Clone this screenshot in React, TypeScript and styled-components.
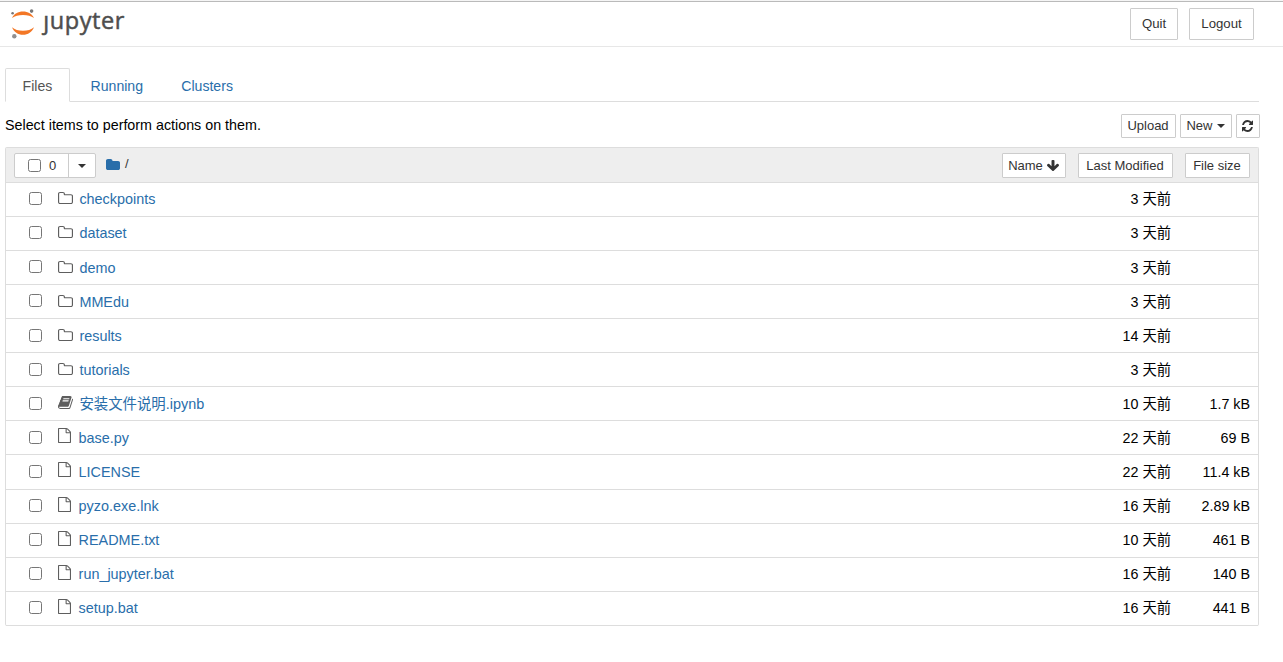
import React, { FC } from 'react'
import styled, { createGlobalStyle } from 'styled-components'

const GlobalStyle = createGlobalStyle`
  * {
    box-sizing: border-box;
  }

  body {
    margin: 0;
    background: #fff;
    color: #000;
    font-family: 'Liberation Sans', 'Noto Sans CJK SC', sans-serif;
    font-size: 14px;
    line-height: 20px;
  }
`

const Page = styled.div`
  height: 662px;
  overflow: hidden;
  border-top: 1px solid #f5f5f5;
`

const Header = styled.header`
  display: flex;
  justify-content: space-between;
  height: 46px;
  padding: 6px 29px 0 10px;
  border-top: 1px solid #bababa;
  border-bottom: 1px solid #e7e7e7;
`

const Logo = styled.svg`
  display: block;
  width: 120px;
  height: 34px;
  overflow: visible;
`

const HeaderButtons = styled.div`
  display: flex;
  gap: 11px;
`

const HeaderButton = styled.button<{ $width: number }>`
  width: ${(p) => p.$width}px;
  height: 32px;
  padding: 0;
  border: 1px solid #ccc;
  border-radius: 1px;
  background: #fff;
  color: #333;
  font: 13.2px/20px 'Liberation Sans', sans-serif;
`

const Main = styled.main`
  width: 1254px;
  margin: 21px 0 0 5px;
`

const Tabs = styled.nav`
  display: flex;
  height: 34px;
  border-bottom: 1px solid #ddd;
`

const Tab = styled.a<{ $active?: boolean }>`
  height: 34px;
  margin-right: 3px;
  padding: 7px 16.6px 0;
  border: 1px solid ${(p) => (p.$active ? '#ddd' : 'transparent')};
  border-bottom-color: ${(p) => (p.$active ? '#fff' : 'transparent')};
  border-radius: 2px 2px 0 0;
  color: ${(p) => (p.$active ? '#555' : '#296eaa')};
  font-size: 14.1px;
`

const Toolbar = styled.div`
  display: flex;
  justify-content: space-between;
  height: 45px;
  padding-top: 12px;
`

const Hint = styled.span`
  font-size: 14.3px;
  line-height: 22px;
`

const ToolbarButtons = styled.div`
  display: flex;
  gap: 4px;
  margin-right: -1px;
`

const SmallButton = styled.button<{ $width: number; $height?: number }>`
  display: flex;
  align-items: center;
  justify-content: center;
  gap: 4px;
  width: ${(p) => p.$width}px;
  height: ${(p) => p.$height || 24}px;
  padding: 0 1px 0 0;
  border: 1px solid #ccc;
  border-radius: 1px;
  background: #fff;
  color: #333;
  font: 13px/20px 'Liberation Sans', sans-serif;
  white-space: nowrap;
`

const Caret = styled.span`
  border: 4px solid transparent;
  border-top-color: currentColor;
  border-bottom: 0;
`

const List = styled.div`
  border: 1px solid #ddd;
  border-bottom: 0;
  border-radius: 2px;
`

const ListHeader = styled.div`
  display: flex;
  align-items: flex-start;
  height: 34.84px;
  padding: 5px 8px 0;
  border-bottom: 1px solid #ddd;
  background: #eee;
`

const SelectGroup = styled.div`
  display: flex;
  width: 82px;
  height: 25px;
  border: 1px solid #ccc;
  border-radius: 2px;
  background: #fff;
`

const SelectAll = styled.label`
  display: flex;
  align-items: center;
  gap: 8px;
  width: 54px;
  padding-left: 13px;
  border-right: 1px solid #ccc;
  color: #333;
  font-size: 13px;
`

const SelectMenu = styled.div`
  display: flex;
  flex: 1;
  align-items: center;
  justify-content: center;
  color: #333;
`

const Checkbox = styled.input`
  flex: none;
  width: 13px;
  height: 13px;
  margin: 0;
`

const Breadcrumb = styled.div`
  display: flex;
  flex: 1;
  align-items: center;
  gap: 5px;
  margin: 1px 0 0 10px;
  color: #333;
  font-size: 13px;
`

const SortButtons = styled.div`
  display: flex;
  gap: 12px;
`

const Row = styled.div`
  display: flex;
  align-items: center;
  height: 34.08px;
  padding: 0 8px 0 23px;
  border-bottom: 1px solid #ddd;
  font-size: 14.4px;

  ${Checkbox} {
    margin-top: -1.32px;
  }
`

const IconSlot = styled.span<{ $gap: number; $lift: number }>`
  display: flex;
  flex: none;
  align-items: center;
  margin: ${(p) => -p.$lift}px ${(p) => p.$gap}px 0 16px;
  color: #5e5e5e;
`

const Name = styled.a`
  flex: 1;
  color: #296eaa;
`

const Modified = styled.span`
  font-size: 14.3px;
`

const Size = styled.span`
  width: 79px;
  font-size: 14.3px;
  text-align: right;
`

const glyphs = {
  folder: {
    box: '64 128 1664 1408',
    d: 'M1728 608v704q0 92-66 158t-158 66h-1216q-92 0-158-66t-66-158v-960q0-92 66-158t158-66h320q92 0 158 66t66 158v32h672q92 0 158 66t66 158z',
  },
  folderOpen: {
    box: '64 128 1664 1408',
    d: 'M1600 1312v-704q0-40-28-68t-68-28h-704q-40 0-68-28t-28-68v-64q0-40-28-68t-68-28h-320q-40 0-68 28t-28 68v960q0 40 28 68t68 28h1216q40 0 68-28t28-68zm128-704v704q0 92-66 158t-158 66h-1216q-92 0-158-66t-66-158v-960q0-92 66-158t158-66h320q92 0 158 66t66 158v32h672q92 0 158 66t66 158z',
  },
  file: {
    box: '0 0 1536 1792',
    d: 'M1468 380q28 28 48 76t20 88v1152q0 40-28 68t-68 28h-1344q-40 0-68-28t-28-68v-1600q0-40 28-68t68-28h896q40 0 88 20t76 48zm-444-244v376h376q-10-29-22-41l-313-313q-12-12-41-22zm384 1528v-1024h-416q-40 0-68-28t-28-68v-416h-768v1536h1280z',
  },
  notebook: {
    box: '64 128 1664 1536',
    d: 'M1703 478q40 57 18 129l-275 906q-19 64-76.5 107.5t-122.5 43.5h-923q-77 0-148.5-53.5t-99.5-131.5q-24-67-2-127 0-4 3-27t4-37q1-8-3-21.5t-3-19.5q2-11 8-21t16.5-23.5 16.5-23.5q23-38 45-91.5t30-91.5q3-10 .5-30t-.5-28q3-11 17-28t17-23q21-36 42-92t25-90q1-9-2.5-32t.5-28q4-13 22-30.5t22-22.5q19-26 42.5-84.5t27.5-96.5q1-8-3-25.5t-2-26.5q2-8 9-18t18-23 17-21q8-12 16.5-30.5t15-35 16-36 19.5-32 26.5-23.5 36-11.5 47.5 5.5l-1 3q38-9 51-9h761q74 0 114 56t18 130l-274 906q-36 119-71.5 153.5t-128.5 34.5h-869q-27 0-38 15-11 16-1 43 24 70 144 70h923q29 0 56-15.5t35-41.5l300-987q7-22 5-57 38 15 59 43zm-1064 2q-4 13 2 22.5t20 9.5h608q13 0 25.5-9.5t16.5-22.5l21-64q4-13-2-22.5t-20-9.5h-608q-13 0-25.5 9.5t-16.5 22.5zm-83 256q-4 13 2 22.5t20 9.5h608q13 0 25.5-9.5t16.5-22.5l21-64q4-13-2-22.5t-20-9.5h-608q-13 0-25.5 9.5t-16.5 22.5z',
  },
  refresh: {
    box: '128 128 1536 1536',
    d: 'M1639 1056q0 5-1 7-64 268-268 434.5t-478 166.5q-146 0-282.5-55t-243.5-157l-129 129q-19 19-45 19t-45-19-19-45v-448q0-26 19-45t45-19h448q26 0 45 19t19 45-19 45l-137 137q71 66 161 102t187 36q134 0 250-65t186-179q11-17 53-117 8-23 30-23h192q13 0 22.5 9.5t9.5 22.5zm25-800v448q0 26-19 45t-45 19h-448q-26 0-45-19t-19-45 19-45l138-138q-148-137-349-137-134 0-250 65t-186 179q-11 17-53 117-8 23-30 23h-199q-13 0-22.5-9.5t-9.5-22.5v-7q65-268 270-434.5t480-166.5q146 0 284 55.5t245 156.5l130-129q19-19 45-19t45 19 19 45z',
  },
  arrowDown: {
    box: '117 128 1558 1483',
    d: 'M1675 832q0 53-37 90l-651 652q-39 37-91 37-53 0-90-37l-651-652q-38-36-38-90 0-53 38-91l74-75q39-37 91-37 53 0 90 37l294 294v-704q0-52 38-90t90-38h128q52 0 90 38t38 90v704l294-294q37-37 90-37 52 0 91 37l75 75q37 39 37 91z',
  },
}

type GlyphName = keyof typeof glyphs

type GlyphProps = {
  name: GlyphName
  width: number
  height: number
  color?: string
}

const Glyph: FC<GlyphProps> = ({ name, width, height, color = 'currentColor' }) => (
  <svg
    width={width}
    height={height}
    viewBox={glyphs[name].box}
    preserveAspectRatio="none"
    fill={color}
  >
    <path d={glyphs[name].d} />
  </svg>
)

type Entry = {
  kind: 'folderOpen' | 'notebook' | 'file'
  name: string
  modified: string
  size?: string
}

const entries: Entry[] = [
  { kind: 'folderOpen', name: 'checkpoints', modified: '3 天前' },
  { kind: 'folderOpen', name: 'dataset', modified: '3 天前' },
  { kind: 'folderOpen', name: 'demo', modified: '3 天前' },
  { kind: 'folderOpen', name: 'MMEdu', modified: '3 天前' },
  { kind: 'folderOpen', name: 'results', modified: '14 天前' },
  { kind: 'folderOpen', name: 'tutorials', modified: '3 天前' },
  { kind: 'notebook', name: '安装文件说明.ipynb', modified: '10 天前', size: '1.7 kB' },
  { kind: 'file', name: 'base.py', modified: '22 天前', size: '69 B' },
  { kind: 'file', name: 'LICENSE', modified: '22 天前', size: '11.4 kB' },
  { kind: 'file', name: 'pyzo.exe.lnk', modified: '16 天前', size: '2.89 kB' },
  { kind: 'file', name: 'README.txt', modified: '10 天前', size: '461 B' },
  { kind: 'file', name: 'run_jupyter.bat', modified: '16 天前', size: '140 B' },
  { kind: 'file', name: 'setup.bat', modified: '16 天前', size: '441 B' },
]

const iconSizes = {
  folderOpen: { width: 15, height: 12, gap: 6.4, lift: 2 },
  notebook: { width: 15, height: 13, gap: 6.4, lift: 3 },
  file: { width: 13, height: 15, gap: 7.6, lift: 4 },
}

const JupyterLogo: FC = () => (
  <Logo viewBox="0 0 120 34">
    <path d="M2 10C4 5.700 8 3.400 13 3.400s9 2.300 11 6.600C21.300 7.700 17.500 6.900 13 6.900S4.700 7.700 2 10z" fill="#f37726" />
    <path d="M2 19.200C4 23.800 8 26.800 13 26.800s9-3 11-7.600C21.300 21.500 17.500 22.800 13 22.800S4.700 21.500 2 19.200z" fill="#f37726" />
    <circle cx="2.600" cy="5.300" r="1.300" fill="#767677" />
    <circle cx="21.600" cy="3.100" r="1.800" fill="#767677" />
    <circle cx="4.300" cy="28.300" r="2.200" fill="#8f8f90" />
    <text
      x="33.300"
      y="21.200"
      textLength="81"
      fontFamily="'Open Sans', sans-serif"
      fontSize="23.500"
      fill="#4e4e4e"
      stroke="#4e4e4e"
      strokeWidth="0.500"
    >
      ȷupyter
    </text>
  </Logo>
)

const FileRow: FC<{ entry: Entry }> = ({ entry }) => {
  const icon = iconSizes[entry.kind]
  return (
    <Row>
      <Checkbox type="checkbox" />
      <IconSlot $gap={icon.gap} $lift={icon.lift}>
        <Glyph name={entry.kind} width={icon.width} height={icon.height} />
      </IconSlot>
      <Name>{entry.name}</Name>
      <Modified>{entry.modified}</Modified>
      <Size>{entry.size}</Size>
    </Row>
  )
}

const App: FC = () => (
  <>
    <GlobalStyle />
    <Page>
      <Header>
        <JupyterLogo />
        <HeaderButtons>
          <HeaderButton $width={48}>Quit</HeaderButton>
          <HeaderButton $width={65}>Logout</HeaderButton>
        </HeaderButtons>
      </Header>
      <Main>
        <Tabs>
          <Tab $active>Files</Tab>
          <Tab>Running</Tab>
          <Tab>Clusters</Tab>
        </Tabs>
        <Toolbar>
          <Hint>Select items to perform actions on them.</Hint>
          <ToolbarButtons>
            <SmallButton $width={55}>Upload</SmallButton>
            <SmallButton $width={52}>
              New
              <Caret />
            </SmallButton>
            <SmallButton $width={24}>
              <Glyph name="refresh" width={11} height={12} />
            </SmallButton>
          </ToolbarButtons>
        </Toolbar>
        <List>
          <ListHeader>
            <SelectGroup>
              <SelectAll>
                <Checkbox type="checkbox" />0
              </SelectAll>
              <SelectMenu>
                <Caret />
              </SelectMenu>
            </SelectGroup>
            <Breadcrumb>
              <Glyph name="folder" width={14} height={11} color="#296eaa" />/
            </Breadcrumb>
            <SortButtons>
              <SmallButton $width={64} $height={25}>
                Name
                <Glyph name="arrowDown" width={12} height={11} />
              </SmallButton>
              <SmallButton $width={95} $height={25}>
                Last Modified
              </SmallButton>
              <SmallButton $width={65} $height={25}>
                File size
              </SmallButton>
            </SortButtons>
          </ListHeader>
          {entries.map((entry) => (
            <FileRow key={entry.name} entry={entry} />
          ))}
        </List>
      </Main>
    </Page>
  </>
)

export default App
